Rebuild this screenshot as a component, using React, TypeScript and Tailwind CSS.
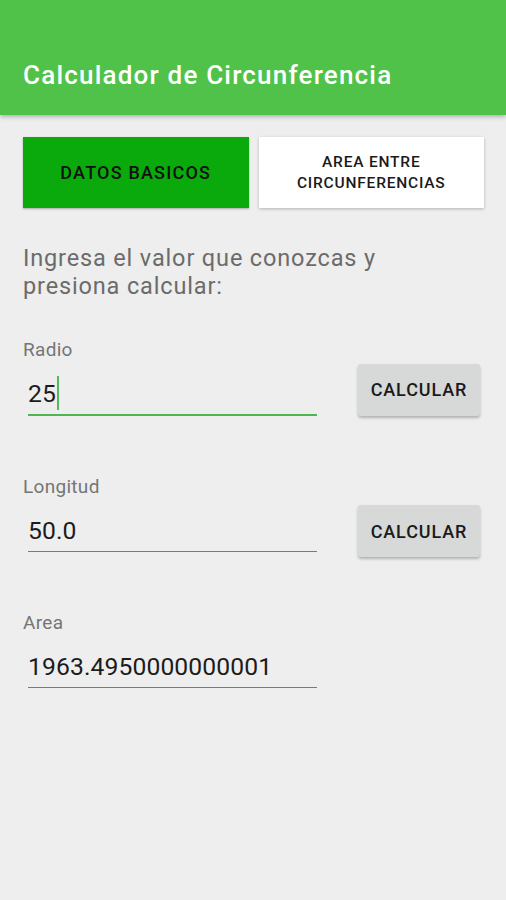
import React from "react";

const font = { fontFamily: "Roboto, 'Noto Sans', Arial, sans-serif" };

function Field({
  label,
  value,
  focused,
  button,
  btnTop,
  className,
}: {
  label: string;
  value: string;
  focused?: boolean;
  button?: boolean;
  btnTop?: string;
  className?: string;
}) {
  return (
    <div className={className}>
      <div className="text-[19px] leading-[22px] tracking-[0.3px] text-[#757575]">{label}</div>
      <div className="flex items-start">
        <div
          className={
            "ml-[5px] w-[289px] pt-[18px] pb-[5px] " +
            (focused ? "border-b-2 border-[#4DB653]" : "border-b border-[#7a7a7a] mb-[1px]")
          }
        >
          <div className="relative h-[30px] text-[24.7px] leading-[30px] tracking-[0.1px] text-[#1c1c1c]">
            {value}
            {focused && (
              <span className="absolute top-[-3px] ml-[1px] inline-block h-[34px] w-[2px] bg-[#56B95B]" />
            )}
          </div>
        </div>
        {button && (
          <button
            className={
              "ml-auto mr-[4px] flex h-[52px] w-[122px] items-center justify-center rounded-[3px] bg-[#D7D8D8] text-[18px] font-medium tracking-[0.9px] text-[#1a1a1a] shadow-[0_2px_3px_rgba(0,0,0,0.25)] " +
              (btnTop ?? "mt-[2.5px]")
            }
          >
            CALCULAR
          </button>
        )}
      </div>
    </div>
  );
}

export default function App() {
  return (
    <div className="min-h-[900px] w-[506px] bg-[#EEEEEE]" style={font}>
      <div className="relative h-[115px] bg-[#50C249] pl-[23px] pt-[61px] shadow-[0_2px_4px_rgba(0,0,0,0.25)]">
        <div className="whitespace-nowrap text-[26px] font-medium leading-[28px] tracking-[1.2px] text-white">
          Calculador de Circunferencia
        </div>
      </div>
      <div className="pl-[23px] pr-[22px] pt-[22px]">
        <div className="grid h-[71px] grid-cols-2 gap-[10px]">
          <div className="flex items-center justify-center bg-[#0BAA0C] text-[18px] font-medium tracking-[1.2px] text-[#111] shadow-[0_1px_2px_rgba(0,0,0,0.3)]">
            DATOS BASICOS
          </div>
          <div className="flex flex-col items-center justify-center bg-white text-center text-[15.5px] font-medium leading-[21px] tracking-[0.8px] text-[#1a1a1a] shadow-[0_1px_3px_rgba(0,0,0,0.25)]">
            <span>AREA ENTRE</span>
            <span>CIRCUNFERENCIAS</span>
          </div>
        </div>
        <div className="mt-[36px] whitespace-nowrap text-[23.5px] leading-[28px] tracking-[0.85px] text-[#6b6b6b]">
          Ingresa el valor que conozcas y
          <br />
          presiona calcular:
        </div>
        <Field className="mt-[39px]" label="Radio" value="25" focused button />
        <Field className="mt-[59.5px]" label="Longitud" value="50.0" button btnTop="mt-[7.5px]" />
        <Field className="mt-[54.5px]" label="Area" value="1963.4950000000001" />
      </div>
    </div>
  );
}
